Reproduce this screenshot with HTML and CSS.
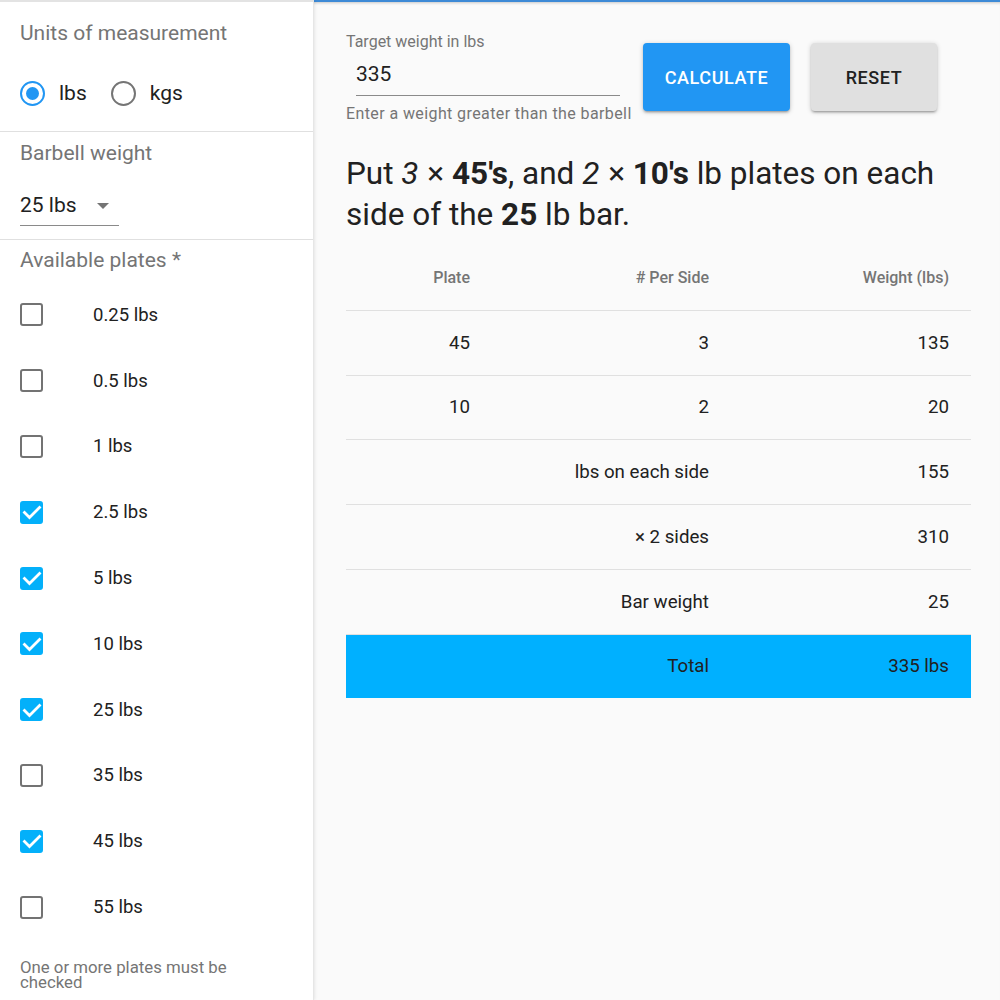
FILE: index.html
```html
<!DOCTYPE html>
<html>
<head>
<meta charset="utf-8">
<link rel="stylesheet" href="styles.css">
</head>
<body>
<aside class="sidebar">
  <section class="sec sec-units">
    <div class="sec-title">Units of measurement</div>
    <div class="radio-row">
      <label class="radio checked"><span class="radio-circle"></span><span class="radio-label">lbs</span></label>
      <label class="radio"><span class="radio-circle"></span><span class="radio-label">kgs</span></label>
    </div>
  </section>
  <section class="sec sec-bar">
    <div class="sec-title">Barbell weight</div>
    <div class="select"><span class="select-value">25 lbs</span><span class="select-arrow"></span></div>
  </section>
  <section class="sec sec-plates">
    <div class="sec-title">Available plates *</div>
    <ul class="plates">
      <li class="plate"><span class="cb"></span><span class="plate-label">0.25 lbs</span></li>
      <li class="plate"><span class="cb"></span><span class="plate-label">0.5 lbs</span></li>
      <li class="plate"><span class="cb"></span><span class="plate-label">1 lbs</span></li>
      <li class="plate"><span class="cb on"><svg viewBox="0 0 24 24"><path d="M4.5 12.5l5 5 10-10" /></svg></span><span class="plate-label">2.5 lbs</span></li>
      <li class="plate"><span class="cb on"><svg viewBox="0 0 24 24"><path d="M4.5 12.5l5 5 10-10" /></svg></span><span class="plate-label">5 lbs</span></li>
      <li class="plate"><span class="cb on"><svg viewBox="0 0 24 24"><path d="M4.5 12.5l5 5 10-10" /></svg></span><span class="plate-label">10 lbs</span></li>
      <li class="plate"><span class="cb on"><svg viewBox="0 0 24 24"><path d="M4.5 12.5l5 5 10-10" /></svg></span><span class="plate-label">25 lbs</span></li>
      <li class="plate"><span class="cb"></span><span class="plate-label">35 lbs</span></li>
      <li class="plate"><span class="cb on"><svg viewBox="0 0 24 24"><path d="M4.5 12.5l5 5 10-10" /></svg></span><span class="plate-label">45 lbs</span></li>
      <li class="plate"><span class="cb"></span><span class="plate-label">55 lbs</span></li>
    </ul>
    <div class="plates-help">One or more plates must be<br>checked</div>
  </section>
</aside>
<main class="main">
  <div class="form-row">
    <div class="field">
      <div class="field-label">Target weight in lbs</div>
      <div class="field-input">335</div>
      <div class="field-help">Enter a weight greater than the barbell</div>
    </div>
    <button class="btn btn-primary">CALCULATE</button>
    <button class="btn btn-default">RESET</button>
  </div>
  <h1 class="result">Put <i>3</i> × <b>45's</b>, and <i>2</i> × <b>10's</b> lb plates on each side of the <b>25</b> lb bar.</h1>
  <div class="table">
    <div class="tr th"><div>Plate</div><div># Per Side</div><div>Weight (lbs)</div></div>
    <div class="tr"><div>45</div><div>3</div><div>135</div></div>
    <div class="tr"><div>10</div><div>2</div><div>20</div></div>
    <div class="tr"><div></div><div>lbs on each side</div><div>155</div></div>
    <div class="tr"><div></div><div>× 2 sides</div><div>310</div></div>
    <div class="tr"><div></div><div>Bar weight</div><div>25</div></div>
    <div class="tr total"><div></div><div>Total</div><div>335 lbs</div></div>
  </div>
</main>
</body>
</html>
```

FILE: styles.css
```css
html, body {
  margin: 0;
  padding: 0;
}
body {
  font-family: Roboto, "Liberation Sans", sans-serif;
  display: flex;
  height: 1000px;
  overflow: hidden;
  color: #212121;
}

/* Sidebar */
.sidebar {
  width: 313px;
  flex: none;
  background: #fff;
  border-top: 2px solid #e3e3e3;
  border-right: 1px solid #e6e6e6;
  box-shadow: 1px 0 3px rgba(0,0,0,0.08);
  position: relative;
  z-index: 1;
}
.sec {
  border-bottom: 1px solid #e0e0e0;
}
.sec-plates {
  border-bottom: none;
}
.sec-title {
  padding-left: 20px;
  font-size: 21px;
  line-height: 26px;
  color: #757575;
}
.sec-units {
  padding-top: 18px;
  height: 111px;
}
.radio-row {
  display: flex;
  margin-top: 34px;
  padding-left: 20px;
  height: 26px;
  align-items: center;
}
.radio {
  display: flex;
  align-items: center;
  margin-right: 24px;
}
.radio-circle {
  width: 21px;
  height: 21px;
  border: 2.5px solid #757575;
  border-radius: 50%;
  position: relative;
  margin-right: 14px;
}
.radio.checked .radio-circle {
  border-color: #2196f3;
}
.radio.checked .radio-circle::after {
  content: "";
  position: absolute;
  left: 4px;
  top: 4px;
  width: 13px;
  height: 13px;
  border-radius: 50%;
  background: #2196f3;
}
.radio-label {
  font-size: 21px;
  line-height: 26px;
}
.sec-bar {
  padding-top: 8px;
  height: 99px;
}
.select {
  margin: 26px 0 0 20px;
  width: 99px;
  height: 34px;
  box-sizing: border-box;
  border-bottom: 1px solid #8a8a8a;
  display: flex;
  align-items: flex-start;
  justify-content: space-between;
}
.select-value {
  font-size: 21px;
  line-height: 26px;
}
.select-arrow {
  width: 0;
  height: 0;
  border-left: 6px solid transparent;
  border-right: 6px solid transparent;
  border-top: 6px solid #757575;
  margin-top: 11px;
  margin-right: 10px;
}
.sec-plates {
  padding-top: 7px;
}
.plates {
  list-style: none;
  margin: 9px 0 0;
  padding: 0;
}
.plate {
  height: 65.8px;
  display: flex;
  align-items: center;
  padding-left: 20px;
}
.cb {
  width: 23px;
  height: 23px;
  box-sizing: border-box;
  border: 2.5px solid #737373;
  border-radius: 3px;
  flex: none;
  display: flex;
  align-items: center;
  justify-content: center;
}
.cb.on {
  background: #03b0fa;
  border-color: #03b0fa;
}
.cb svg {
  width: 24px;
  height: 24px;
  flex: none;
  fill: none;
  stroke: #fff;
  stroke-width: 2.8;
  stroke-linecap: square;
}
.plate-label {
  margin-left: 50px;
  font-size: 18.5px;
  line-height: 24px;
}
.plates-help {
  margin: 20px 0 0 20px;
  font-size: 16.8px;
  line-height: 15px;
  color: #757575;
}

/* Main */
.main {
  flex: 1;
  background: #fafafa;
  border-top: 2px solid #3d8ad6;
  box-shadow: inset 0 3px 3px -2px rgba(0,0,0,0.2);
  padding: 31px 29px 0 32px;
  box-sizing: border-box;
}
.form-row {
  display: flex;
  align-items: flex-start;
}
.field {
  width: 286px;
}
.field-label {
  font-size: 16px;
  line-height: 18px;
  color: #757575;
}
.field-input {
  margin-left: 10px;
  width: 264px;
  padding-top: 10px;
  padding-bottom: 8px;
  font-size: 21px;
  line-height: 26px;
  border-bottom: 1px solid #8a8a8a;
}
.field-help {
  margin-top: 9px;
  font-size: 16px;
  line-height: 18px;
  letter-spacing: 0.4px;
  color: #757575;
  white-space: nowrap;
}
.btn {
  margin-top: 10px;
  height: 68px;
  border: none;
  border-radius: 4px;
  font-family: Roboto, "Liberation Sans", sans-serif;
  font-size: 18px;
  font-weight: 500;
  letter-spacing: 0.6px;
  box-shadow: 0 1px 5px rgba(0,0,0,0.2), 0 2px 2px rgba(0,0,0,0.14), 0 3px 1px -2px rgba(0,0,0,0.12);
  padding: 0;
}
.btn-primary {
  margin-left: 11px;
  width: 147px;
  background: #2196f3;
  color: #fff;
}
.btn-default {
  margin-left: 21px;
  width: 126px;
  background: #e0e0e0;
  color: #212121;
}
.result {
  margin: 30px 0 0;
  font-size: 31.5px;
  line-height: 41px;
  font-weight: 400;
  color: #212121;
}
.result i {
  padding-right: 1px;
}
.result b {
  font-weight: 700;
}
.table {
  margin-top: 11px;
  width: 625px;
}
.tr {
  display: grid;
  grid-template-columns: 180px 239px 1fr;
  height: 64.8px;
  box-sizing: border-box;
  border-bottom: 1px solid #e0e0e0;
  align-items: center;
  font-size: 18.7px;
}
.tr > div {
  text-align: right;
  padding-right: 56px;
}
.tr > div:last-child {
  padding-right: 22px;
}
.tr.th {
  font-size: 16px;
  font-weight: 500;
  color: #757575;
}
.tr.total {
  background: #00b0ff;
  border-bottom: none;
  height: 63px;
}
```
